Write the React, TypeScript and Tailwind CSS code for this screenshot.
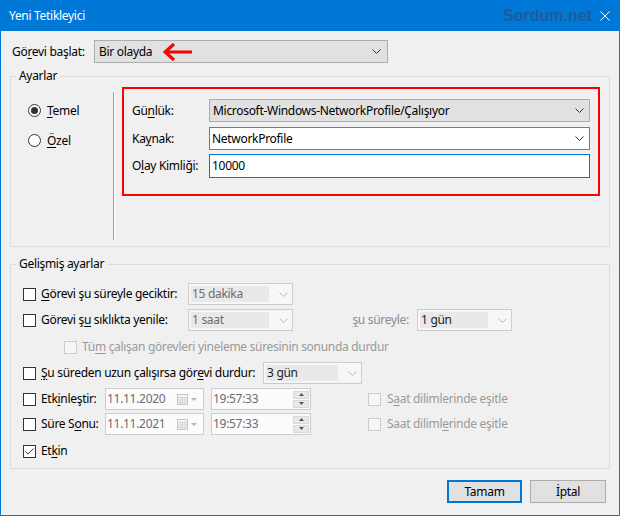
import React from 'react';

// chevron used by every combo box
function Chevron({ color = '#333333' }: { color?: string }) {
  return (
    <svg width="9" height="5" viewBox="0 0 9 5" className="shrink-0">
      <path d="M0.5 0.5 L4.5 4.5 L8.5 0.5" fill="none" stroke={color} strokeWidth="1" />
    </svg>
  );
}

function Check({ checked = false, disabled = false }: { checked?: boolean; disabled?: boolean }) {
  return (
    <span
      className={`w-[13px] h-[13px] shrink-0 border flex items-center justify-center ${
        disabled ? 'border-[#cccccc] bg-[#f6f6f6]' : 'border-[#333333] bg-white'
      }`}
    >
      {checked && (
        <svg width="11" height="11" viewBox="0 0 11 11">
          <path d="M1.5 5.5 L4 8 L9.5 2.5" fill="none" stroke="#333333" strokeWidth="1" />
        </svg>
      )}
    </span>
  );
}

function Radio({ selected = false }: { selected?: boolean }) {
  return (
    <span className="w-[13px] h-[13px] shrink-0 rounded-full border border-[#333333] bg-white flex items-center justify-center">
      {selected && <span className="w-[7px] h-[7px] rounded-full bg-[#333333]" />}
    </span>
  );
}

// greyed combo with the inner highlight rect, like the disabled win32 one
function DisCombo({ value, width, dark = false }: { value: string; width: string; dark?: boolean }) {
  return (
    <div className={`${width} h-[22px] shrink-0 border border-[#cccccc] bg-[#f7f7f7] flex items-center pl-[2px] pr-[4px]`}>
      <span
        className={`flex-1 h-[16px] bg-[#e9e9e9] flex items-center pl-[1px] mr-[10px] ${
          dark ? 'text-[#222222]' : 'text-[#6d6d6d]'
        }`}
      >
        {value}
      </span>
      <Chevron color="#b8b8b8" />
    </div>
  );
}

function DateBox({ value }: { value: string }) {
  return (
    <div className="w-[99px] h-[22px] shrink-0 border border-[#cccccc] bg-[#fbfbfb] flex items-center pl-[1px] pr-[6px] text-[#6d6d6d]">
      <span className="flex-1">{value}</span>
      <svg width="11" height="11" viewBox="0 0 11 11" className="mr-[3px]">
        <rect x="0.5" y="0.5" width="10" height="10" fill="#f4f4f4" stroke="#c4c4c4" />
        <path d="M0.5 3.5 H10.5 M0.5 6 H10.5 M0.5 8.5 H10.5 M3 3.5 V10.5 M5.5 3.5 V10.5 M8 3.5 V10.5" stroke="#d6d6d6" />
      </svg>
      <svg width="6" height="3" viewBox="0 0 6 3">
        <path d="M0 0 H6 L3 3 Z" fill="#b4b4b4" />
      </svg>
    </div>
  );
}

function TimeBox({ value }: { value: string }) {
  return (
    <div className="w-[100px] h-[22px] shrink-0 border border-[#cccccc] bg-[#fbfbfb] flex items-center pl-[1px] pr-[1px] text-[#6d6d6d]">
      <span className="flex-1">{value}</span>
      <div className="flex flex-col gap-[1px]">
        <span className="w-[16px] h-[8px] bg-[#e8e8e8] border border-[#d9d9d9] flex items-center justify-center">
          <svg width="5" height="3" viewBox="0 0 5 3">
            <path d="M0 3 H5 L2.5 0 Z" fill="#555555" />
          </svg>
        </span>
        <span className="w-[16px] h-[8px] bg-[#e8e8e8] border border-[#d9d9d9] flex items-center justify-center">
          <svg width="5" height="3" viewBox="0 0 5 3">
            <path d="M0 0 H5 L2.5 3 Z" fill="#555555" />
          </svg>
        </span>
      </div>
    </div>
  );
}

function U({ children }: { children: React.ReactNode }) {
  return <span className="underline decoration-1 underline-offset-[2px]">{children}</span>;
}

export default function App() {
  return (
    <div className="w-[620px] h-[516px] flex flex-col bg-[#f0f0f0] border-x border-b border-[#0078d7] font-['Noto_Sans',sans-serif] text-[12px] leading-[16px] tracking-[-0.3px] whitespace-nowrap text-black overflow-hidden">
      {/* Title bar */}
      <div className="h-[31px] shrink-0 bg-[#0078d7] flex items-center pl-[8px]">
        <span className="text-white">Yeni Tetikleyici</span>
        <span className="ml-auto font-['Liberation_Sans',sans-serif] font-bold text-[16px] tracking-normal text-[#1f5b9b]">
          Sordum.net
        </span>
        <svg width="10" height="10" viewBox="0 0 10 10" className="ml-[8px] mr-[9px]">
          <path d="M0.5 0.5 L9.5 9.5 M9.5 0.5 L0.5 9.5" stroke="white" strokeWidth="1" />
        </svg>
      </div>

      {/* Görevi başlat */}
      <div className="mt-[9px] flex items-center h-[23px] pl-[11px]">
        <span className="w-[82px] shrink-0">
          Gö<U>r</U>evi başlat:
        </span>
        <div className="w-[294px] h-[23px] border border-[#adadad] bg-[#e1e1e1] flex items-center pl-[4px] pr-[6px]">
          <span>Bir olayda</span>
          <svg width="30" height="20" viewBox="0 0 30 20" className="ml-[11px]">
            <path d="M2 10 H29 M11 2 L2 10 L11 18" fill="none" stroke="#ff0000" strokeWidth="3.2" />
          </svg>
          <span className="ml-auto">
            <Chevron />
          </span>
        </div>
      </div>

      {/* Ayarlar */}
      <fieldset className="mt-[5px] mx-[9px] border border-[#dcdcdc] pb-[6px]">
        <legend className="ml-[5px] px-[3px]">Ayarlar</legend>
        <div className="flex items-start">
          <div className="ml-[17px] w-[85px] shrink-0 mt-[20px] flex flex-col gap-[17px]">
            <div className="flex items-center gap-[6px] h-[13px]">
              <Radio selected />
              <span>
                <U>T</U>emel
              </span>
            </div>
            <div className="flex items-center gap-[6px] h-[13px]">
              <Radio />
              <span>
                <U>Ö</U>zel
              </span>
            </div>
          </div>
          <div className="w-[2px] shrink-0 mt-[8px] h-[148px] border-l border-r border-l-[#a0a0a0] border-r-white" />
          <div className="flex-1 ml-[7px] mr-[9px] mt-[3px] h-[109px] border-2 border-[#ff0000] flex flex-col pt-[10px] pl-[8px] pr-[8px]">
            <div className="flex items-center">
              <span className="w-[77px] shrink-0">
                Gü<U>n</U>lük:
              </span>
              <div className="flex-1 h-[23px] border border-[#adadad] bg-[#e1e1e1] flex items-center pl-[3px] pr-[5px]">
                <span className="flex-1">Microsoft-Windows-NetworkProfile/Çalışıyor</span>
                <Chevron />
              </div>
            </div>
            <div className="flex items-center mt-[5px]">
              <span className="w-[77px] shrink-0">
                Ka<U>y</U>nak:
              </span>
              <div className="flex-1 h-[23px] border border-[#7a7a7a] bg-white flex items-center pl-[2px] pr-[5px]">
                <span className="flex-1">NetworkProfile</span>
                <Chevron />
              </div>
            </div>
            <div className="flex items-center mt-[4px]">
              <span className="w-[77px] shrink-0">
                O<U>l</U>ay Kimliği:
              </span>
              <div className="flex-1 h-[24px] border border-[#0078d7] bg-white flex items-center pl-[2px]">
                10000
              </div>
            </div>
          </div>
        </div>
      </fieldset>

      {/* Gelişmiş ayarlar */}
      <fieldset className="mt-[9px] mx-[9px] border border-[#dcdcdc] pl-[12px] pb-[6px]">
        <legend className="-ml-[7px] px-[3px]">Gelişmiş ayarlar</legend>
        <div className="flex items-center h-[22px] mt-[11px]">
          <Check />
          <span className="ml-[5px] w-[147px] shrink-0">
            <U>G</U>örevi şu süreyle geciktir:
          </span>
          <DisCombo value="15 dakika" width="w-[105px]" />
        </div>
        <div className="flex items-center h-[22px] mt-[4px]">
          <Check />
          <span className="ml-[5px] w-[147px] shrink-0">
            Görevi ş<U>u</U> sıklıkta yenile:
          </span>
          <DisCombo value="1 saat" width="w-[105px]" />
          <span className="w-[124px] shrink-0 text-right pr-[8px] text-[#8c8c8c]">
            <U>ş</U>u süreyle:
          </span>
          <DisCombo value="1 gün" width="w-[95px]" dark />
        </div>
        <div className="flex items-center h-[22px] mt-[5px] pl-[41px]">
          <Check disabled />
          <span className="ml-[5px] text-[#9a9a9a]">
            Tü<U>m</U> çalışan görevleri yineleme süresinin sonunda durdur
          </span>
        </div>
        <div className="flex items-center h-[22px] mt-[4px]">
          <Check />
          <span className="ml-[5px] w-[222px] shrink-0">
            <U>Ş</U>u süreden uzun çalışırsa gör<U>e</U>vi durdur:
          </span>
          <DisCombo value="3 gün" width="w-[99px]" dark />
        </div>
        <div className="flex items-center h-[22px] mt-[4px]">
          <Check />
          <span className="ml-[5px] w-[64px] shrink-0">
            Etk<U>i</U>nleştir:
          </span>
          <DateBox value="11.11.2020" />
          <span className="ml-[7px]">
            <TimeBox value="19:57:33" />
          </span>
          <span className="ml-[57px]">
            <Check disabled />
          </span>
          <span className="ml-[6px] text-[#9a9a9a]">
            S<U>a</U>at dilimlerinde eşitle
          </span>
        </div>
        <div className="flex items-center h-[22px] mt-[3px]">
          <Check />
          <span className="ml-[5px] w-[64px] shrink-0">
            Süre S<U>o</U>nu:
          </span>
          <DateBox value="11.11.2021" />
          <span className="ml-[7px]">
            <TimeBox value="19:57:33" />
          </span>
          <span className="ml-[57px]">
            <Check disabled />
          </span>
          <span className="ml-[6px] text-[#9a9a9a]">
            Saat diliml<U>e</U>rinde eşitle
          </span>
        </div>
        <div className="flex items-center h-[22px] mt-[5px]">
          <Check checked />
          <span className="ml-[5px]">
            Et<U>k</U>in
          </span>
        </div>
      </fieldset>

      {/* Buttons */}
      <div className="mt-[11px] flex justify-end gap-[8px] pr-[13px]">
        <button className="w-[75px] h-[23px] border-2 border-[#0078d7] bg-[#e1e1e1] flex items-center justify-center">
          Tamam
        </button>
        <button className="w-[76px] h-[23px] border border-[#adadad] bg-[#e1e1e1] flex items-center justify-center">
          İptal
        </button>
      </div>
    </div>
  );
}
